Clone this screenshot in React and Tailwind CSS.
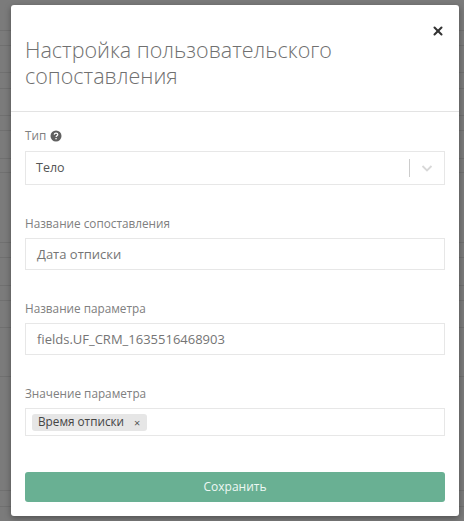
import { X } from "lucide-react";

const rowLines = [
  "h-[31px]", "h-[15px]", "h-[27px]", "h-[16px]", "h-[27px]", "h-[15px]", "h-[28px]", "h-[14px]",
  "h-[70px]", "h-[15px]", "h-[28px]", "h-[15px]", "h-[27px]", "h-[49px]", "h-[114px]", "h-[16px]",
];

function Field({ label, children, className }) {
  return (
    <div className={className}>
      <div className="text-[11.75px] leading-[17px] text-[#808080] mb-[6px]">{label}</div>
      {children}
    </div>
  );
}

function TextBox({ value }) {
  return (
    <div className="h-[32px] border border-[#e7e7e7] pl-[11px] pt-[1px] flex items-center text-[13px] text-[#757575]">
      {value}
    </div>
  );
}

export default function App() {
  return (
    <div className="relative w-[464px] h-[521px] overflow-hidden bg-[#7b7b7b] font-['Open_Sans',sans-serif]">
      {/* table behind the backdrop */}
      <div className="flex flex-col">
        {rowLines.map((h, i) => (
          <div key={i} className={`${h} border-b border-[#707070]`} />
        ))}
      </div>

      {/* MODAL */}
      <div className="absolute left-[11px] top-[5px] w-[448px] h-[511px] bg-white rounded-[3px] shadow-[0_2px_6px_rgba(0,0,0,0.35)] flex flex-col">
        <div className="relative h-[107px] border-b border-[#e3e3e3] pl-[14px] pt-[32px]">
          <h2 className="text-[21.5px] leading-[26px] font-light text-[#707070]">
            Настройка пользовательского
            <br />
            сопоставления
          </h2>
          <X className="absolute right-[14px] top-[19px] w-[14px] h-[14px] text-[#333333]" strokeWidth={3.5} />
        </div>

        <div className="px-[14px] pt-[15px] flex flex-col">
          <div>
            <div className="flex items-center gap-[4px] text-[11.75px] leading-[17px] text-[#808080] mb-[7px]">
              Тип
              <svg viewBox="0 0 12 12" className="w-[12px] h-[12px]">
                <circle cx="6" cy="6" r="5.5" fill="#606060" />
                <path d="M4.2 4.6c.1-1 .9-1.500 1.800-1.500 1 0 1.800.6 1.800 1.500 0 1.300-1.700 1.200-1.700 2.500" fill="none" stroke="#fff" strokeWidth="1.2" />
                <rect x="5.4" y="8" width="1.3" height="1.3" fill="#fff" />
              </svg>
            </div>
            <div className="h-[34px] border border-[#e7e7e7] pl-[10px] flex items-center text-[12.5px] text-[#555555]">
              <span className="flex-1 pt-[1px]">Тело</span>
              <span className="w-px h-[18px] bg-[#cccccc]" />
              <svg viewBox="0 0 20 20" className="w-[34px] h-[20px]" fill="none">
                <path d="M5.5 8l4.500 4.500L14.500 8" stroke="#d8d8d8" strokeWidth="1.8" />
              </svg>
            </div>
          </div>

          <Field label="Название сопоставления" className="mt-[30px]">
            <TextBox value="Дата отписки" />
          </Field>

          <Field label="Название параметра" className="mt-[30px]">
            <TextBox value="fields.UF_CRM_1635516468903" />
          </Field>

          <Field label="Значение параметра" className="mt-[30px]">
            <div className="h-[28px] border border-[#e7e7e7] pl-[6px] flex items-center">
              <span className="h-[17px] pl-[6px] pr-[7px] rounded-[3px] bg-[#e6e6e6] flex items-center gap-[10px] text-[11.75px] text-[#444444]">
                Время отписки
                <span className="text-[11px] leading-none text-[#555555]">×</span>
              </span>
            </div>
          </Field>

          <button className="mt-[36px] h-[30px] w-full rounded-[3px] bg-[#69b093] text-[12px] font-normal text-[#eef8f3]">
            Сохранить
          </button>
        </div>
      </div>
    </div>
  );
}
